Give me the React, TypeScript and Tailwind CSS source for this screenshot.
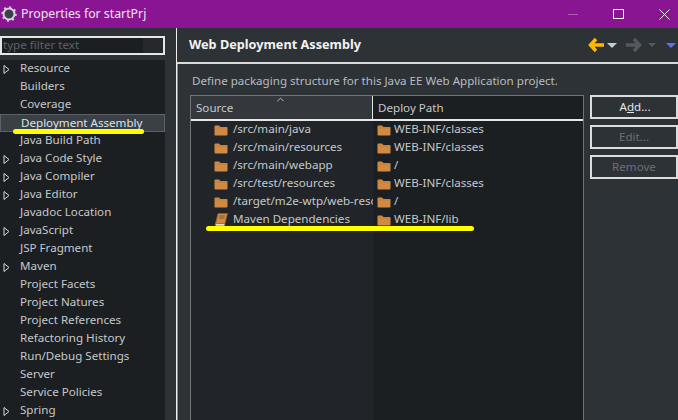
import React from "react";
import { ChevronUp } from "lucide-react";

const treeItems = [
  { name: "Resource", arrow: true },
  { name: "Builders" },
  { name: "Coverage" },
  { name: "Deployment Assembly", selected: true },
  { name: "Java Build Path" },
  { name: "Java Code Style", arrow: true },
  { name: "Java Compiler", arrow: true },
  { name: "Java Editor", arrow: true },
  { name: "Javadoc Location" },
  { name: "JavaScript", arrow: true },
  { name: "JSP Fragment" },
  { name: "Maven", arrow: true },
  { name: "Project Facets" },
  { name: "Project Natures" },
  { name: "Project References" },
  { name: "Refactoring History" },
  { name: "Run/Debug Settings" },
  { name: "Server" },
  { name: "Service Policies" },
  { name: "Spring", arrow: true },
];

const rows = [
  { source: "/src/main/java", path: "WEB-INF/classes" },
  { source: "/src/main/resources", path: "WEB-INF/classes" },
  { source: "/src/main/webapp", path: "/" },
  { source: "/src/test/resources", path: "WEB-INF/classes" },
  { source: "/target/m2e-wtp/web-resources", path: "/" },
  { source: "Maven Dependencies", path: "WEB-INF/lib", book: true },
];

const FolderIcon = () => (
  <svg width="14" height="11" viewBox="0 0 14 11" className="mt-[1px] shrink-0">
    <path d="M0.5 1.5 Q0.5 0.5 1.5 0.5 H5 L6.5 2 H12.5 Q13.5 2 13.5 3 V9.5 Q13.5 10.5 12.5 10.5 H1.5 Q0.5 10.5 0.5 9.5 Z" fill="#d08a42" />
    <rect x="0.5" y="2.6" width="13" height="0.7" fill="#b87a38" />
  </svg>
);

const BookIcon = () => (
  <svg width="14" height="14" viewBox="0 0 14 14" className="shrink-0">
    <path d="M4 0.5 H13.5 L11 10.5 H1.5 Z" fill="#cf8a45" stroke="#8a5a2a" strokeWidth="0.8" />
    <path d="M1.5 10.5 H11 L10.6 13 H2 Q0.6 12 1.5 10.5 Z" fill="#eadcc6" stroke="#8a5a2a" strokeWidth="0.6" />
    <path d="M5.5 3 H11 M5 5 H10.5" stroke="#80522a" strokeWidth="0.9" />
  </svg>
);

const TreeArrow = () => (
  <svg width="7" height="9" viewBox="0 0 7 9" className="absolute left-[3px] top-[5px]">
    <path d="M1 0.5 L6 4.5 L1 8.5 Z" fill="none" stroke="#d5d8da" strokeWidth="1" />
  </svg>
);

const Caret = ({ color, size = 10 }: { color: string; size?: number }) => (
  <svg width={size} height={size / 2} viewBox="0 0 10 5">
    <path d="M0 0 H10 L5 5 Z" fill={color} />
  </svg>
);

const ArrowIcon = ({ color, flip }: { color: string; flip?: boolean }) => (
  <svg width="16" height="16" viewBox="0 0 16 16" className={flip ? "-scale-x-100" : ""}>
    <path d="M8 2 L2.5 8 L8 14 M3 8 H16" fill="none" stroke={color} strokeWidth="3.4" />
  </svg>
);

export default function App() {
  return (
    <div className="flex h-[420px] w-[678px] flex-col overflow-hidden bg-[#2d3237] font-['Noto_Sans',sans-serif] text-[11.6px] text-[#c4c8cb]">
      {/* Title bar */}
      <div className="flex h-[28px] shrink-0 items-center bg-[#8a1593] text-[12.3px] text-[#f0e4f1]">
        <svg width="16" height="16" viewBox="0 0 16 16" className="ml-[1px] mr-[4px]">
          <circle cx="8" cy="8" r="5.5" fill="#3a3f52" stroke="#d8d8d8" strokeWidth="2" />
          <circle cx="8" cy="8" r="7" fill="none" stroke="#d8d8d8" strokeWidth="1.5" strokeDasharray="2 3.5" />
        </svg>
        <span>Properties for startPrj</span>
        <div className="ml-auto flex items-center">
          <div className="mr-[35px] h-[1px] w-[10px] bg-[#a560ab]" />
          <div className="mr-[35px] h-[10px] w-[11px] border border-white" />
          <svg width="11" height="11" viewBox="0 0 11 11" className="mr-[8px]">
            <path d="M0.5 0.5 L10.5 10.5 M10.5 0.5 L0.5 10.5" stroke="white" strokeWidth="1" />
          </svg>
        </div>
      </div>

      <div className="flex min-h-0 flex-1">
        {/* Left tree */}
        <div className="flex w-[176px] shrink-0 flex-col">
          <div className="mt-[8px] flex h-[19px] w-[165px] border-2 border-[#e6e6e6] bg-[#25292c] leading-[14px] text-[#5d6266]">
            <div className="w-[141px] bg-[#1c1f22] pl-[1px]">type filter text</div>
          </div>
          <div className="mt-[5px] flex w-[165px] flex-1 flex-col overflow-hidden bg-[#1c1f22]">
            {treeItems.map((item) => (
              <div
                key={item.name}
                className={`relative h-[18px] shrink-0 pl-[20px] leading-[16px] ${
                  item.selected ? "border border-[#5b6167] bg-[#3a4046] pl-[18px] leading-[14px] text-[#dfe2e4]" : ""
                }`}
              >
                {item.arrow && <TreeArrow />}
                {item.name}
                {item.selected && (
                  <div className="absolute left-[12px] top-[14px] h-[5px] w-[131px] rounded-full bg-[#ffff00]" />
                )}
              </div>
            ))}
          </div>
        </div>

        {/* Right side */}
        <div className="flex min-w-0 flex-1 flex-col border-l border-l-[#f0f0f0]">
          <div className="flex h-[36px] shrink-0 items-center justify-between border-b-2 border-b-[#d8dadb] pl-[12px] pr-[2px]">
            <span className="text-[12.7px] font-bold text-[#f2f2f2]">Web Deployment Assembly</span>
            <div className="flex items-center">
              <ArrowIcon color="#ffb800" />
              <span className="ml-[3px] mr-[9px] flex"><Caret color="#c8cbce" /></span>
              <ArrowIcon color="#55595e" flip />
              <span className="ml-[6px] mr-[10px] flex"><Caret color="#55595e" size={8} /></span>
              <Caret color="#5b72f0" />
            </div>
          </div>

          <div className="flex min-h-0 flex-1 border-l border-l-[#8a8d90] pl-[12px]">
            <div className="flex min-w-0 flex-1 flex-col">
              <div className="h-[31px] shrink-0 pl-[2px] pt-[9px] leading-[16px] text-[#b8bcbf]">
                Define packaging structure for this Java EE Web Application project.
              </div>
              <div className="flex items-start">
                {/* Table */}
                <div className="relative h-[330px] w-[394px] shrink-0 border border-[#6f7377] bg-[#1c1f22]">
                  <div className="flex h-[25px] border-b-2 border-b-[#e6e6e6]">
                    <div className="relative w-[182px] shrink-0 border-r border-r-[#e6e6e6] bg-[#34383c] pl-[5px] leading-[24px]">
                      <ChevronUp size={11} className="absolute left-[84px] top-[-2px] text-[#c4c8cb]" />
                      Source
                    </div>
                    <div className="flex-1 pl-[5px] leading-[24px]">Deploy Path</div>
                  </div>
                  <div className="relative flex h-[300px]">
                    <div className="w-[182px] shrink-0 bg-[#212529]">
                      {rows.map((r) => (
                        <div key={r.source} className="flex h-[18px] items-center overflow-hidden whitespace-nowrap pl-[23px] leading-[16px]">
                          {r.book ? <BookIcon /> : <FolderIcon />}
                          <span className="mb-[2px] ml-[5px]">{r.source}</span>
                        </div>
                      ))}
                    </div>
                    <div className="flex-1">
                      {rows.map((r) => (
                        <div key={r.source} className="flex h-[18px] items-center whitespace-nowrap pl-[4px] leading-[16px]">
                          <FolderIcon />
                          <span className="mb-[2px] ml-[3px]">{r.path}</span>
                        </div>
                      ))}
                    </div>
                    <div className="absolute left-[15px] top-[105px] h-[5px] w-[268px] rounded-full bg-[#ffff00]" />
                  </div>
                </div>
                {/* Buttons */}
                <div className="ml-[6px] flex flex-1 flex-col gap-[6px]">
                  <div className="h-[24px] border-2 border-[#dcdcdc] pl-[2px] text-center leading-[20px] text-[#e4e6e8]">
                    A<span className="underline">d</span>d...
                  </div>
                  <div className="h-[24px] border-2 border-[#dcdcdc] text-center leading-[20px] text-[#6b7074]">Edit...</div>
                  <div className="h-[24px] border-2 border-[#dcdcdc] text-center leading-[20px] text-[#6b7074]">Remove</div>
                </div>
              </div>
            </div>
          </div>
        </div>
      </div>
    </div>
  );
}
